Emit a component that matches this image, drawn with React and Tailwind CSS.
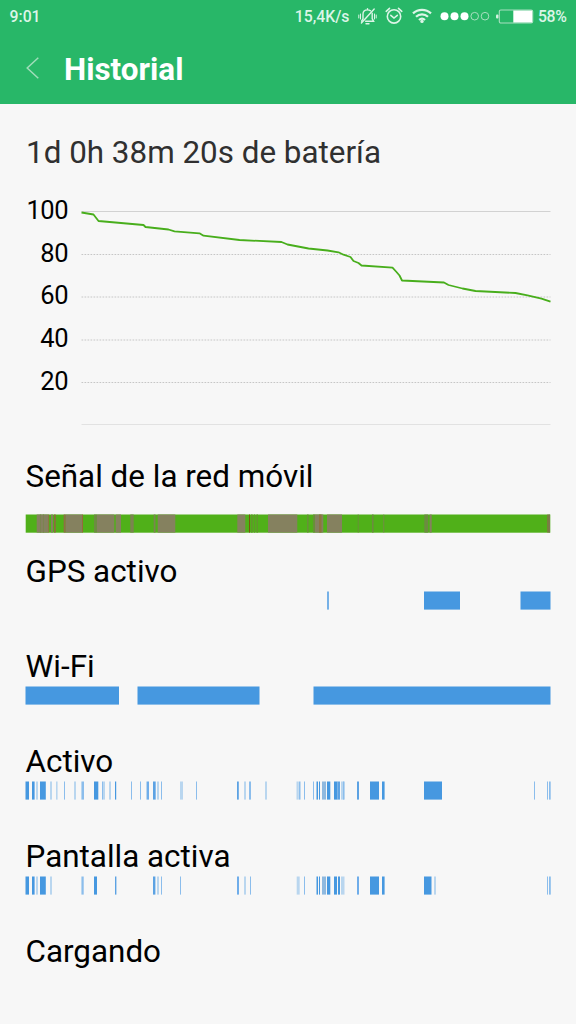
const BLUE = "#4698e0";
const LIGHT = "#b9d6ef";
const MID = "#8bbdec";

// Each segment: [start x, width, colour]
const signal = [
  [36.7, 11.6, "#85815f"], [40, 1, "#7b8450"], [43, 1, "#7b8450"], [48.3, 0.8, "#a0664a"],
  [51, 2, "#85815f"], [54, 1.7, "#8f6a3c"], [63.7, 2, "#8f6e45"], [65.7, 16.3, "#85815f"],
  [82, 1, "#96693c"], [94, 3, "#6c8c40"], [97, 17.3, "#85815f"], [115.7, 5.3, "#85815f"],
  [130.3, 3.4, "#7b8450"], [153.7, 1.8, "#7b8450"], [157.7, 17.6, "#85815f"],
  [237.3, 8, "#85815f"], [249, 1, "#7b5510"], [251, 1.6, "#60972c"], [254, 1, "#60972c"], [256.5, 1.5, "#60972c"],
  [268, 29.3, "#85815f"], [307, 1.6, "#689038"], [313, 2, "#689038"], [315, 8.3, "#85815f"], [319, 2.5, "#8d7440"],
  [327, 15, "#85815f"], [357.7, 1, "#689038"], [372, 1.6, "#6c8c40"], [383.4, 0.8, "#7b8450"],
  [424.3, 3.8, "#6c8c40"], [429.7, 2, "#85815f"], [547.3, 1, "#8c6c4c"], [548.3, 1.7, "#807650"],
];

const gps = [[327, 2, "#76b1e7"], [424, 36, BLUE], [520.5, 30, BLUE]];
const wifi = [[25.5, 93.5, BLUE], [137.5, 122, BLUE], [313.5, 237, BLUE]];

const active = [
  [25.5, 3.5, BLUE], [32, 2, BLUE], [34, 1, MID], [36, 2, LIGHT], [40, 5.8, BLUE],
  [50, 2, LIGHT], [56, 1.6, LIGHT], [64, 1, MID], [74, 2, LIGHT], [81, 1, LIGHT], [82, 2, MID],
  [94, 4.3, BLUE], [102, 1, MID], [103, 2, LIGHT], [109, 2, LIGHT], [115, 1.2, BLUE],
  [131, 1, MID], [140, 1, MID], [146, 1, LIGHT], [147, 2, "#6fadea"], [153, 2, "#5ca2e3"], [155, 1, MID],
  [157, 2, LIGHT], [161, 1, MID], [180, 3, LIGHT], [196, 1, MID],
  [237, 1.8, "#5ca2e3"], [244, 2, LIGHT], [249, 2, MID], [265, 2, LIGHT],
  [296.5, 2.3, LIGHT], [299, 1.5, MID], [304, 1, MID], [313, 1, MID], [316.5, 1.5, BLUE], [319, 1, BLUE],
  [322, 4, "#8fb9df"], [327, 3.3, BLUE], [334, 3.5, BLUE], [337.5, 2.5, "#5ca2e3"], [341, 4, LIGHT], [343, 1, MID],
  [357, 2, "#5ca2e3"], [370, 9, BLUE], [382, 2.6, BLUE], [424, 18, BLUE],
  [534, 1, MID], [547, 1, MID], [549, 1.7, MID],
];

const screen = [
  [25.5, 3.5, BLUE], [32, 2, BLUE], [34, 1, MID], [36, 2, LIGHT], [40, 5.8, BLUE], [50, 2, LIGHT],
  [81, 1, LIGHT], [82, 1.7, MID], [94, 3, BLUE], [115, 1.4, "#5ca2e3"],
  [153, 2, "#5ca2e3"], [155, 1, LIGHT], [157, 2, LIGHT], [161, 1, MID], [180, 1, MID],
  [237, 2, "#6fadea"], [244, 2, LIGHT], [250, 1, MID],
  [296.7, 3, LIGHT], [304, 1, MID], [316.5, 1.5, BLUE], [319, 1, BLUE], [322, 4, "#8fb9df"], [327, 3.3, BLUE],
  [334, 3, BLUE], [338, 2, BLUE], [341, 3.5, LIGHT], [357, 2, "#6fadea"], [370, 9, BLUE], [382, 2.6, BLUE],
  [424, 7.5, BLUE], [434, 2, LIGHT], [547, 1, MID], [549, 1.8, MID],
];

function Bar({ segments, base }) {
  return (
    <svg className="block h-[19px] w-full" viewBox="25 0 526 19">
      {base && <rect x="25.7" y="0.5" width="524.6" height="18.2" fill={base} />}
      {segments.map(([x, w, fill], i) => (
        <rect key={i} x={x} y="0.5" width={w} height="18.1" fill={fill} />
      ))}
    </svg>
  );
}

function Section({ label, segments, base, gap }) {
  return (
    <section className="h-[95px] px-[25px]">
      <h2 className="pl-[0.5px] text-[31.4px] leading-9 whitespace-nowrap">{label}</h2>
      {segments && (
        <div className={gap ? "pt-[19px]" : "pt-px"}>
          <Bar segments={segments} base={base} />
        </div>
      )}
    </section>
  );
}

function StatusBar() {
  return (
    <div className="flex h-8 items-center pl-[9.5px] text-[15.8px] font-medium text-[#dcf5e7]">
      <span className="pt-0.5">9:01</span>
      <span className="ml-auto pt-0.5">15,4K/s</span>
      <svg className="ml-[8px] h-[19px] w-[19px]" viewBox="0 0 19 19" fill="none" stroke="currentColor" strokeWidth="1.4" strokeLinecap="round">
        <path d="M5 12V7.2C5 4.4 6.8 2.9 9.5 2.9c1.2 0 2.2.3 3 .9M14.2 6.2v5.5l1.4 2.5H7.6M3.6 14.2 5 11.8M9.5 1.6v1M8 16.8h3" />
        <path d="M16.2 2 3.4 16" />
        <path d="M2.5 7v5M.8 8v3M16.5 7v5M18.2 8v3" strokeWidth="1" />
      </svg>
      <svg className="ml-[8px] h-[18px] w-[18px]" viewBox="0 0 18 18" fill="none" stroke="currentColor" strokeWidth="1.6" strokeLinecap="round">
        <circle cx="9" cy="9.4" r="6.7" />
        <path d="m5.8 8.3 3.2 2.7 3.3-2.7M1.2 4.3 4.5 1.4M16.8 4.3l-3.3-2.9" />
      </svg>
      <svg className="ml-[9px] h-[16px] w-5" viewBox="0 0 20 16" fill="none" stroke="currentColor" strokeWidth="2.2">
        <path d="M1 5.4c5-4.8 13-4.8 18 0M4 8.8c3.4-3.3 8.6-3.3 12 0M7 12c1.8-1.7 4.2-1.7 6 0" />
        <circle cx="10" cy="13.4" r="1.7" fill="currentColor" stroke="none" />
      </svg>
      <svg className="ml-[8.5px] h-[10px] w-[50px]" viewBox="0 0 50 10">
        <g fill="#fff">
          <circle cx="4.5" cy="5.2" r="4" />
          <circle cx="14.5" cy="5.2" r="4" />
          <circle cx="24.5" cy="5.2" r="4" />
        </g>
        <g fill="none" stroke="#a8dfc0" strokeWidth="1">
          <circle cx="34.7" cy="5.2" r="3.8" />
          <circle cx="45" cy="5.2" r="3.8" />
        </g>
      </svg>
      <svg className="ml-[6px] h-[15px] w-[38px]" viewBox="0 0 38 15">
        <rect x="0" y="5.5" width="2.5" height="4" rx="1" fill="#d5f2e1" />
        <rect x="3.3" y="1" width="33.4" height="13" rx="1.5" fill="none" stroke="#a8dfc0" strokeWidth="1.1" />
        <rect x="17.3" y="1.5" width="18.9" height="12" fill="#fff" />
      </svg>
      <span className="ml-[4px] w-[38px] pt-0.5 tracking-[-0.4px]">58%</span>
    </div>
  );
}

const points =
  "1,12.5 13,14.5 18,21 63,25 65,27 88,29.5 94,31.3 119,33.3 123,35.7 159,40 201,42 207,44.5 228,48.5 247,50.5 258,52.3 263,54.7 270,57 273,61 278,63 281,65.5 312,67.7 316,72 319,75.5 321.5,80.5 363.5,82.5 368,85 382,88.5 395,91 435,93 447,95.3 461,98.7 470,101.7";

function Chart() {
  return (
    <div className="flex h-[240px] pl-[25px]">
      <div className="flex w-[43px] flex-col items-end text-[25.5px] tracking-[-0.5px]">
        {[100, 80, 60, 40, 20].map((n) => (
          <span key={n} className="h-[42.65px] leading-[20px]">{n}</span>
        ))}
      </div>
      <svg className="ml-[12.5px] h-[240px] w-[470px]" viewBox="0.5 0 470 240" fill="none">
        <path d="M1 11.5H470" stroke="#d2d2d2" />
        <path d="M1 54.5H470M1 97H470M1 140H470M1 182.5H470" stroke="#c6c6c6" strokeDasharray="1.7 1.3" />
        <path d="M1 224.5H470" stroke="#e2e2e2" />
        <polyline points={points} stroke="#48ae1c" strokeWidth="1.8" strokeLinejoin="round" />
      </svg>
    </div>
  );
}

export default function App() {
  return (
    <main className="h-[1024px] w-[576px] overflow-hidden bg-[#f7f7f7] font-[Roboto,sans-serif] text-black">
      <header className="h-[104px] bg-[#28b768]">
        <StatusBar />
        <div className="flex h-[72px] items-center pl-[26px]">
          <svg className="h-[22px] w-[14px]" viewBox="0 0 14 22" fill="none" stroke="#a0ddba" strokeWidth="1.5">
            <path d="M12.3.7 1.2 11l11.1 10.3" />
          </svg>
          <h1 className="ml-[24px] pt-[4px] text-[31.4px] font-bold text-white">Historial</h1>
        </div>
      </header>
      <p className="h-24 pt-[31px] pl-[26px] text-[31.4px] leading-9 text-[#303030]">1d 0h 38m 20s de batería</p>
      <Chart />
      <div className="pt-[19px]">
        <Section label="Señal de la red móvil" segments={signal} base="#50b019" gap />
        <Section label="GPS activo" segments={gps} />
        <Section label="Wi-Fi" segments={wifi} />
        <Section label="Activo" segments={active} />
        <Section label="Pantalla activa" segments={screen} />
        <Section label="Cargando" />
      </div>
    </main>
  );
}
